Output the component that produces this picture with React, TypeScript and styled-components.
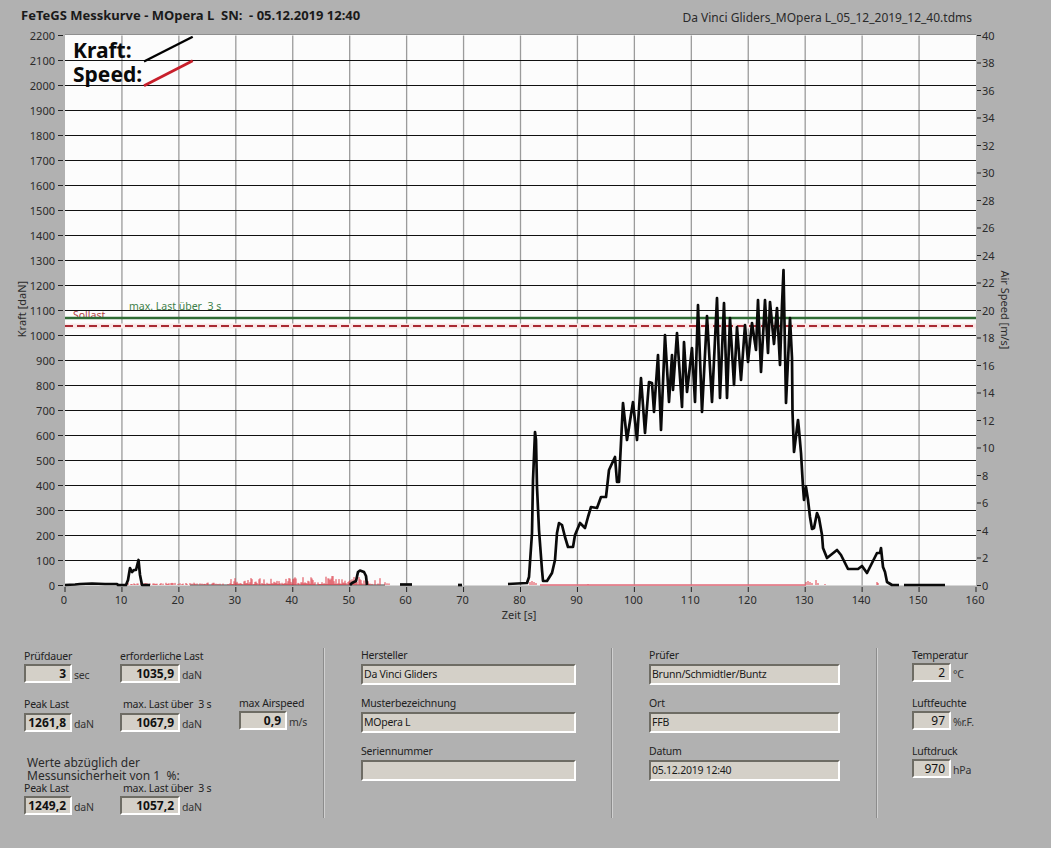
import styled, { createGlobalStyle } from 'styled-components';

const FONT = '"Noto Sans", "Liberation Sans", sans-serif';

const GlobalStyle = createGlobalStyle`
  html, body {
    margin: 0;
    padding: 0;
    background: #b1b1b1;
  }
`;

const Page = styled.div`
  width: 1051px;
  height: 848px;
  overflow: hidden;
  background: #b1b1b1;
  color: #222;
  font-family: ${FONT};
  font-size: 10.5px;
  letter-spacing: -0.2px;
`;

const Header = styled.div`
  display: flex;
  justify-content: space-between;
  align-items: center;
  height: 26px;
  padding: 4px 79px 0 21px;
  box-sizing: border-box;
  white-space: pre;
`;

const Title = styled.div`
  font-size: 13px;
  font-weight: 700;
  letter-spacing: 0;
  color: #1a1a1a;
`;

const FileName = styled.div`
  font-size: 12px;
  letter-spacing: 0;
  color: #2a2a2a;
  padding-top: 4px;
`;

const ChartSvg = styled.svg`
  display: block;
  width: 1051px;
  height: 602px;
`;

const TickText = styled.text`
  font-family: ${FONT};
  font-size: 11px;
  letter-spacing: 0;
  fill: #2b2b2b;
`;

const LegendText = styled.text`
  font-family: ${FONT};
  font-size: 21px;
  font-weight: 700;
  letter-spacing: 0;
  fill: #0a0a0a;
`;

const PlotNote = styled.text<{ $color: string }>`
  font-family: ${FONT};
  font-size: 10.5px;
  letter-spacing: 0;
  fill: ${({ $color }) => $color};
  white-space: pre;
`;

const Panel = styled.div`
  display: flex;
  height: 170px;
  margin-top: 20px;
  padding-left: 24px;
`;

const Section = styled.div<{ $width: number; $left?: number }>`
  width: ${({ $width }) => $width}px;
  margin-left: ${({ $left }) => $left ?? 0}px;
  display: flex;
  flex-direction: column;
`;

const Divider = styled.div<{ $left: number }>`
  width: 2px;
  height: 170px;
  margin-left: ${({ $left }) => $left}px;
  background: #d0d0d0;
  border-left: 1px solid #8c8c8c;
  box-sizing: border-box;
`;

const ValueRow = styled.div<{ $top?: number }>`
  display: grid;
  grid-template-columns: 96px 119px auto;
  margin-top: ${({ $top }) => $top ?? 0}px;
`;

const Group = styled.div<{ $lift?: number }>`
  margin-top: ${({ $lift }) => -($lift ?? 0)}px;
`;

const Label = styled.div<{ $indent?: number; $gap?: number }>`
  height: 14px;
  line-height: 14px;
  margin-left: ${({ $indent }) => $indent ?? 0}px;
  margin-bottom: ${({ $gap }) => $gap ?? 1}px;
  white-space: pre;
`;

const FieldLine = styled.div`
  display: flex;
  align-items: center;
  gap: 2px;
`;

const Sunken = styled.div`
  background: #d4d0c8;
  border-style: solid;
  border-width: 2px;
  border-color: #6e6c64 #fff #fff #6e6c64;
  box-sizing: border-box;
`;

const NumberField = styled(Sunken)<{ $width: number; $bold?: boolean }>`
  width: ${({ $width }) => $width}px;
  height: 19px;
  line-height: 15px;
  padding-right: 4px;
  text-align: right;
  font-size: 12px;
  letter-spacing: 0;
  font-weight: ${({ $bold }) => ($bold ? 700 : 400)};
  color: #111;
`;

const Unit = styled.span`
  color: #333;
  padding-top: 3px;
  white-space: pre;
`;

const Note = styled.div`
  margin-top: 24px;
  margin-left: 3px;
  height: 25px;
  line-height: 13px;
  font-size: 12px;
  letter-spacing: 0;
  color: #2a2a2a;
  white-space: pre;
`;

const TextGroup = styled.div`
  margin-bottom: 11px;
`;

const TextField = styled(Sunken)`
  height: 21px;
  line-height: 17px;
  padding-left: 1px;
  font-size: 10.5px;
  letter-spacing: -0.25px;
  color: #1a1a1a;
`;

const EnvGroup = styled.div`
  margin-bottom: 14px;
`;

const PLOT = { left: 65, right: 976, top: 35.5, bottom: 585.5 };
const xForSec = (s: number) => PLOT.left + (s * (PLOT.right - PLOT.left)) / 160;
const yForKraft = (k: number) => PLOT.bottom - k * 0.25;

const kraftTicks = Array.from({ length: 23 }, (_, i) => i * 100);
const timeTicks = Array.from({ length: 17 }, (_, i) => i * 10);
const speedTicks = Array.from({ length: 21 }, (_, i) => i * 2);

// force curve, read off the plot in pixels
const kraftSegments: number[][] = [
  [65, 585, 75, 584.5, 80, 584, 92, 583.5, 105, 584, 117, 584, 118, 585, 126, 585, 128, 580, 130, 568, 132, 572, 134, 570,
    136, 570, 138.5, 560, 140, 575, 142, 585, 150, 585],
  [350, 585, 352, 583, 356, 581, 358, 572, 360, 570.5, 364, 572, 366, 576, 367, 585],
  [400, 584.5, 412, 584.5],
  [458, 585, 462, 585],
  [508, 584, 527, 583, 529, 577, 532, 533, 533, 480, 535, 432, 536, 440, 537, 487, 539, 530, 542, 570, 543, 581, 547, 581,
    552, 573, 555, 560, 557, 533, 559, 523, 562, 525, 565, 537, 568, 547, 573, 547, 575, 535, 580, 523, 585, 528, 588, 517,
    591, 507, 597, 508, 601, 497, 606, 497, 609, 470, 615, 457, 617, 482, 619, 482, 623, 403, 627, 440, 633, 402, 637, 440,
    641, 378, 645, 433, 649, 382, 652, 383, 654, 412, 658, 355, 661, 430, 665, 335, 669, 402, 672, 355, 673, 390, 677, 333,
    682, 407, 684, 342, 687, 392, 692, 348, 695, 402, 698, 305, 702, 412, 707, 316, 712, 402, 717, 298, 720, 398, 724, 303,
    727, 398, 730, 318, 734, 385, 737, 327, 741, 380, 745, 325, 748, 362, 752, 323, 756, 350, 758, 300, 761, 372, 765, 300,
    768, 353, 770, 302, 774, 344, 777, 308, 780, 365, 782, 305, 783.5, 270, 786, 403, 790, 318, 792, 358, 792.5, 412, 794, 452,
    798, 420, 799, 430, 801, 453, 803, 487, 804, 500, 806, 487, 808, 500, 810, 517, 812, 529, 814, 528, 817, 513, 819, 518,
    822, 535, 823, 548, 827, 558, 837, 550, 841, 555, 848, 569, 858, 569, 862, 566, 867, 573, 872, 563, 877, 553, 880, 553,
    881, 548, 883, 567, 885, 572, 887, 582, 892, 585, 899, 585],
  [904, 585, 945, 585],
];

const toPoints = (seg: number[]) => {
  const out: string[] = [];
  for (let i = 0; i < seg.length; i += 2) out.push(`${seg[i]},${seg[i + 1]}`);
  return out.join(' ');
};

// repeatable noise for the speed trace
const noise = (n: number) => {
  const v = Math.sin(n * 12.9898) * 43758.5453;
  return v - Math.floor(v);
};

const speedSpikes = () => {
  let d = '';
  for (let x = 125; x < 390; x += 1) {
    const amp = x < 165 ? 1 : x < 230 ? 1.5 : x < 290 ? 6 : x < 370 ? 8 : 6;
    const n = noise(x);
    if (x > 370 && n < 0.75) continue;
    if (n < (x < 230 ? 0.5 : 0.2)) continue;
    const r = noise(x + 300);
    d += `M${x} 585V${(585 - amp * r * r - 1).toFixed(1)}`;
  }
  for (const [x, h] of [[530, 3], [532, 4], [534, 3], [536, 2], [588, 1], [806, 3], [808, 4], [810, 3], [812, 2], [816, 5], [818, 2], [825, 1], [877, 3], [878, 2]]) {
    d += `M${x} 585V${585 - h}`;
  }
  return d;
};

function Chart() {
  return (
    <ChartSvg viewBox="0 26 1051 602">
      <rect x={PLOT.left} y={PLOT.top - 1} width={PLOT.right - PLOT.left} height={PLOT.bottom - PLOT.top + 1} fill="#fcfcfc" />
      {timeTicks.slice(1, -1).map((t) => (
        <line key={t} x1={xForSec(t)} x2={xForSec(t)} y1={PLOT.top} y2={PLOT.bottom} stroke="#9b9b9b" strokeWidth={1.3} />
      ))}
      {kraftTicks.slice(1, -1).map((k) => (
        <line key={k} x1={PLOT.left} x2={PLOT.right} y1={yForKraft(k)} y2={yForKraft(k)} stroke="#111" strokeWidth={1.2} />
      ))}
      <line x1={PLOT.left} x2={PLOT.right} y1={34.5} y2={34.5} stroke="#8f8f8f" />

      {kraftTicks.map((k) => (
        <g key={k}>
          <line x1={58} x2={63} y1={yForKraft(k)} y2={yForKraft(k)} stroke="#222" />
          <TickText x={55} y={yForKraft(k) + 4} textAnchor="end">{k}</TickText>
        </g>
      ))}
      {speedTicks.map((s) => {
        const y = PLOT.bottom - (s * (PLOT.bottom - PLOT.top)) / 40;
        return (
          <g key={s}>
            <line x1={977} x2={981} y1={y} y2={y} stroke="#222" />
            <TickText x={982} y={y + 4}>{s}</TickText>
          </g>
        );
      })}
      {timeTicks.map((t) => (
        <g key={t}>
          <line x1={xForSec(t)} x2={xForSec(t)} y1={587} y2={592} stroke="#222" />
          <TickText x={xForSec(t) - 1} y={604} textAnchor="middle">{t}</TickText>
        </g>
      ))}

      <TickText x={519} y={619} textAnchor="middle">Zeit [s]</TickText>
      <TickText transform="translate(26 309) rotate(-90)" textAnchor="middle">Kraft [daN]</TickText>
      <TickText transform="translate(1001 310) rotate(90)" textAnchor="middle">Air Speed [m/s]</TickText>

      <PlotNote $color="#3f7f4a" x={129} y={310}>max. Last über  3 s</PlotNote>
      <PlotNote $color="#b23c3f" x={73} y={319}>Sollast</PlotNote>

      <line x1={PLOT.left} x2={PLOT.right} y1={326} y2={326} stroke="#fae8e8" strokeWidth={5} />
      <line x1={PLOT.left} x2={PLOT.right} y1={318} y2={318} stroke="#2f6b34" strokeWidth={2.5} />
      <line x1={PLOT.left} x2={PLOT.right} y1={326} y2={326} stroke="#a92a33" strokeWidth={2.2} strokeDasharray="8 4" />

      <line x1={190} x2={385} y1={585} y2={585} stroke="#444" strokeWidth={1} />
      <path d={speedSpikes()} stroke="#dd3f4a" strokeWidth={1} fill="none" />
      <line x1={540} x2={806} y1={585} y2={585} stroke="#e56a78" strokeWidth={1.4} />
      {kraftSegments.map((seg, i) => (
        <polyline key={i} points={toPoints(seg)} fill="none" stroke="#0a0a0a" strokeWidth={2.7} strokeLinejoin="round" />
      ))}

      <LegendText x={73} y={58}>Kraft:</LegendText>
      <LegendText x={73} y={82}>Speed:</LegendText>
      <line x1={144} y1={61.5} x2={192.7} y2={36.7} stroke="#000" strokeWidth={2.4} />
      <line x1={144} y1={85.7} x2={192.7} y2={60.7} stroke="#c81f2b" strokeWidth={2.8} />
    </ChartSvg>
  );
}

export default function App() {
  return (
    <Page>
      <GlobalStyle />
      <Header>
        <Title>FeTeGS Messkurve - MOpera L  SN:  - 05.12.2019 12:40</Title>
        <FileName>Da Vinci Gliders_MOpera L_05_12_2019_12_40.tdms</FileName>
      </Header>
      <Chart />
      <Panel>
        <Section $width={299}>
          <ValueRow $top={1}>
            <Group>
              <Label>Prüfdauer</Label>
              <FieldLine>
                <NumberField $width={48} $bold>3</NumberField>
                <Unit>sec</Unit>
              </FieldLine>
            </Group>
            <Group>
              <Label>erforderliche Last</Label>
              <FieldLine>
                <NumberField $width={60} $bold>1035,9</NumberField>
                <Unit>daN</Unit>
              </FieldLine>
            </Group>
          </ValueRow>
          <ValueRow $top={14}>
            <Group>
              <Label $gap={2}>Peak Last</Label>
              <FieldLine>
                <NumberField $width={48} $bold>1261,8</NumberField>
                <Unit>daN</Unit>
              </FieldLine>
            </Group>
            <Group>
              <Label $indent={3} $gap={2}>max. Last über  3 s</Label>
              <FieldLine>
                <NumberField $width={60} $bold>1067,9</NumberField>
                <Unit>daN</Unit>
              </FieldLine>
            </Group>
            <Group $lift={1}>
              <Label>max Airspeed</Label>
              <FieldLine>
                <NumberField $width={48} $bold>0,9</NumberField>
                <Unit>m/s</Unit>
              </FieldLine>
            </Group>
          </ValueRow>
          <Note>
            Werte abzüglich der
            <br />
            Messunsicherheit von 1  %:
          </Note>
          <ValueRow>
            <Group>
              <Label $gap={1}>Peak Last</Label>
              <FieldLine>
                <NumberField $width={48} $bold>1249,2</NumberField>
                <Unit>daN</Unit>
              </FieldLine>
            </Group>
            <Group>
              <Label $indent={3} $gap={1}>max. Last über  3 s</Label>
              <FieldLine>
                <NumberField $width={60} $bold>1057,2</NumberField>
                <Unit>daN</Unit>
              </FieldLine>
            </Group>
          </ValueRow>
        </Section>
        <Divider $left={0} />
        <Section $width={215} $left={36}>
          <TextGroup>
            <Label $gap={2}>Hersteller</Label>
            <TextField>Da Vinci Gliders</TextField>
          </TextGroup>
          <TextGroup>
            <Label $gap={2}>Musterbezeichnung</Label>
            <TextField>MOpera L</TextField>
          </TextGroup>
          <TextGroup>
            <Label $gap={2}>Seriennummer</Label>
            <TextField />
          </TextGroup>
        </Section>
        <Divider $left={35} />
        <Section $width={191} $left={36}>
          <TextGroup>
            <Label $gap={2}>Prüfer</Label>
            <TextField>Brunn/Schmidtler/Buntz</TextField>
          </TextGroup>
          <TextGroup>
            <Label $gap={2}>Ort</Label>
            <TextField>FFB</TextField>
          </TextGroup>
          <TextGroup>
            <Label $gap={2}>Datum</Label>
            <TextField>05.12.2019 12:40</TextField>
          </TextGroup>
        </Section>
        <Divider $left={36} />
        <Section $width={110} $left={34}>
          <EnvGroup>
            <Label>Temperatur</Label>
            <FieldLine>
              <NumberField $width={39}>2</NumberField>
              <Unit>°C</Unit>
            </FieldLine>
          </EnvGroup>
          <EnvGroup>
            <Label>Luftfeuchte</Label>
            <FieldLine>
              <NumberField $width={39}>97</NumberField>
              <Unit>%r.F.</Unit>
            </FieldLine>
          </EnvGroup>
          <EnvGroup>
            <Label>Luftdruck</Label>
            <FieldLine>
              <NumberField $width={39}>970</NumberField>
              <Unit>hPa</Unit>
            </FieldLine>
          </EnvGroup>
        </Section>
      </Panel>
    </Page>
  );
}
